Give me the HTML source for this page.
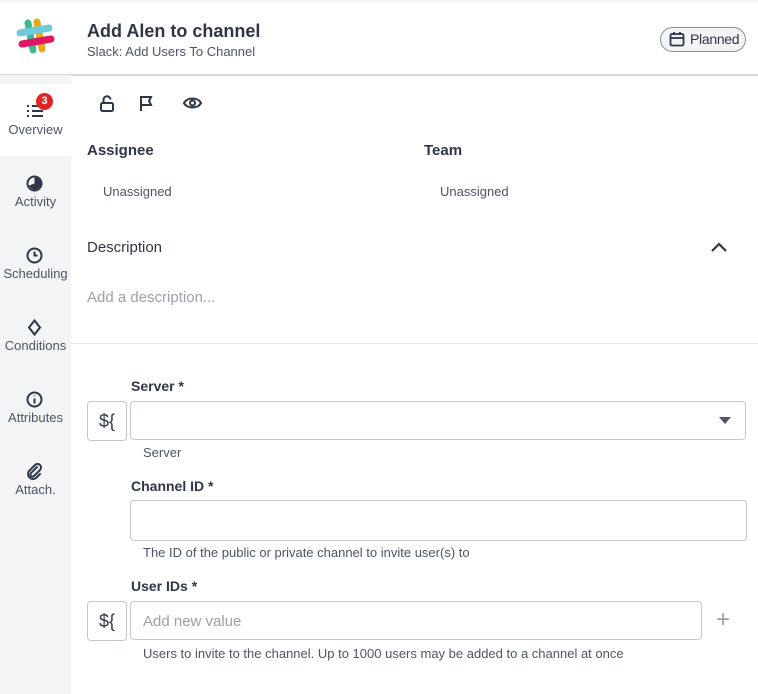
<!DOCTYPE html>
<html><head><style>
*{box-sizing:border-box;margin:0;padding:0}
body{width:758px;height:694px;overflow:hidden;background:#fff;font-family:"Liberation Sans",sans-serif;color:#2d3748;position:relative}
.a{position:absolute}
.side{left:0;top:75px;width:71px;height:619px;background:#f3f4f6}
.nav{width:71px;text-align:center;font-size:13px;color:#4a5568}
.lbl{font-size:15px;font-weight:bold;color:#2d3748}
.hint{font-size:13px;color:#4a5568}
.box{border:1px solid #c3c8cf;border-radius:4px;background:#fff}
.ds{width:40px;height:40px;font-size:18px;text-align:center;line-height:38px;color:#2d3748}
</style></head><body>
<div class="a" style="left:0;top:0;width:758px;height:3px;background:#f3f4f6"></div>
<div class="a" style="left:0;top:74px;width:758px;height:2px;background:#d4d7dc"></div>
<svg class="a" style="left:14px;top:16px" width="42" height="42" viewBox="0 0 42 42">
<g stroke-linecap="round" stroke-width="7">
<line x1="14" y1="7" x2="19" y2="34" stroke="#3eb991"/>
<line x1="23" y1="6" x2="28" y2="33" stroke="#e9a820"/>
<line x1="6" y1="17" x2="35" y2="12" stroke="#6ecadc"/>
<line x1="8" y1="28" x2="37" y2="23" stroke="#e01563"/>
</g></svg>
<div class="a" style="left:87px;top:21px;font-size:18px;font-weight:bold;color:#2d3748">Add Alen to channel</div>
<div class="a" style="left:87px;top:44px;font-size:13px;color:#4a5568">Slack: Add Users To Channel</div>
<div class="a" style="left:660px;top:27px;width:86px;height:25px;border:1px solid #8a929c;border-radius:13px;background:#f3f4f6;font-size:14px;line-height:23px;padding-left:29px;color:#2d3748;letter-spacing:-0.3px;white-space:nowrap">Planned
<svg class="a" style="left:8px;top:3px" width="16" height="16" viewBox="0 0 16 16" fill="none" stroke="#2d3748" stroke-width="1.8"><rect x="1.5" y="3" width="13" height="11.5" rx="1.5"/><line x1="1.5" y1="7" x2="14.5" y2="7"/><line x1="5" y1="1" x2="5" y2="4"/><line x1="11" y1="1" x2="11" y2="4"/></svg></div>

<div class="a side"></div>
<div class="a" style="left:0;top:84px;width:71px;height:72px;background:#fff"></div>
<div class="a nav" style="left:0;top:122px">Overview</div>
<svg class="a" style="left:26px;top:104px" width="18" height="14" viewBox="0 0 18 14" stroke="#2d3748" stroke-width="2"><line x1="1" y1="2" x2="3" y2="2"/><line x1="6" y1="2" x2="17" y2="2"/><line x1="1" y1="7" x2="3" y2="7"/><line x1="6" y1="7" x2="17" y2="7"/><line x1="1" y1="12" x2="3" y2="12"/><line x1="6" y1="12" x2="17" y2="12"/></svg>
<div class="a" style="left:36px;top:93px;width:17px;height:17px;border-radius:50%;background:#e02424;color:#fff;font-size:11px;font-weight:bold;text-align:center;line-height:17px">3</div>
<svg class="a" style="left:26px;top:175px" width="17" height="17" viewBox="0 0 17 17"><circle cx="8.5" cy="8.5" r="7" fill="none" stroke="#2d3748" stroke-width="2"/><path d="M8.5 8.5V2.5A6 6 0 1 1 3 10.5Z" fill="#2d3748"/></svg>
<div class="a nav" style="left:0;top:194px">Activity</div>
<svg class="a" style="left:26px;top:247px" width="17" height="17" viewBox="0 0 17 17" fill="none" stroke="#2d3748" stroke-width="2"><circle cx="8.5" cy="8.5" r="7"/><path d="M8.5 4.5v4h3"/></svg>
<div class="a nav" style="left:0;top:266px">Scheduling</div>
<svg class="a" style="left:27px;top:319px" width="15" height="17" viewBox="0 0 15 17" fill="none" stroke="#2d3748" stroke-width="2"><path d="M7.5 1.5L13 8.5L7.5 15.5L2 8.5Z"/></svg>
<div class="a nav" style="left:0;top:338px">Conditions</div>
<svg class="a" style="left:26px;top:391px" width="17" height="17" viewBox="0 0 17 17" fill="none" stroke="#2d3748" stroke-width="2"><circle cx="8.5" cy="8.5" r="7"/><line x1="8.5" y1="7.5" x2="8.5" y2="12.5"/><line x1="8.5" y1="4.5" x2="8.5" y2="5.2"/></svg>
<div class="a nav" style="left:0;top:410px">Attributes</div>
<svg class="a" style="left:26px;top:463px" width="17" height="17" viewBox="0 0 17 17" fill="none" stroke="#2d3748" stroke-width="2" stroke-linecap="round"><path d="M11 4L5 10a2 2 0 0 0 3 3l6-6a3.5 3.5 0 0 0-5-5L3 8a5 5 0 0 0 7 7l4-4"/></svg>
<div class="a nav" style="left:0;top:482px">Attach.</div>

<svg class="a" style="left:99px;top:95px" width="16" height="17" viewBox="0 0 16 17" fill="none" stroke="#2d3748" stroke-width="2"><rect x="2" y="8" width="12" height="8" rx="1.5"/><path d="M4.5 8V5a3.5 3.5 0 0 1 7-0.5"/></svg>
<svg class="a" style="left:139px;top:95px" width="15" height="17" viewBox="0 0 15 17" fill="none" stroke="#2d3748" stroke-width="2"><path d="M2 16V2h10l-2 4 2 4H2"/></svg>
<svg class="a" style="left:183px;top:96px" width="19" height="14" viewBox="0 0 19 14" fill="none" stroke="#2d3748" stroke-width="2"><path d="M1 7C4 1 15 1 18 7C15 13 4 13 1 7Z"/><circle cx="9.5" cy="7" r="2.5"/></svg>

<div class="a lbl" style="left:87px;top:142px">Assignee</div>
<div class="a lbl" style="left:424px;top:142px">Team</div>
<div class="a hint" style="left:103px;top:184px">Unassigned</div>
<div class="a hint" style="left:440px;top:184px">Unassigned</div>
<div class="a" style="left:87px;top:239px;font-size:15px;color:#2d3748">Description</div>
<svg class="a" style="left:710px;top:241px" width="18" height="12" viewBox="0 0 18 12" fill="none" stroke="#2d3748" stroke-width="2.2"><path d="M2 10L9 3L16 10"/></svg>
<div class="a" style="left:87px;top:289px;font-size:15px;color:#9aa1ab">Add a description...</div>
<div class="a" style="left:71px;top:343px;width:687px;height:1px;background:#e2e5e9"></div>

<div class="a lbl" style="left:131px;top:378px;font-size:14px">Server *</div>
<div class="a box ds" style="left:87px;top:401px">$&#123;</div>
<div class="a box" style="left:130px;top:401px;width:616px;height:39px"></div>
<svg class="a" style="left:719px;top:417px" width="12" height="7" viewBox="0 0 12 7"><path d="M0 0H12L6 7Z" fill="#4a5568"/></svg>
<div class="a hint" style="left:143px;top:445px">Server</div>

<div class="a lbl" style="left:131px;top:478px;font-size:14px">Channel ID *</div>
<div class="a box" style="left:130px;top:500px;width:617px;height:41px"></div>
<div class="a hint" style="left:143px;top:545px">The ID of the public or private channel to invite user(s) to</div>

<div class="a lbl" style="left:131px;top:578px;font-size:14px">User IDs *</div>
<div class="a box ds" style="left:87px;top:601px">$&#123;</div>
<div class="a box" style="left:130px;top:601px;width:572px;height:39px;font-size:15px;color:#9aa1ab;padding:11px 0 0 12px">Add new value</div>
<div class="a" style="left:716px;top:606px;font-size:24px;color:#9aa1ab;font-weight:300">+</div>
<div class="a hint" style="left:143px;top:646px">Users to invite to the channel. Up to 1000 users may be added to a channel at once</div>
</body></html>
